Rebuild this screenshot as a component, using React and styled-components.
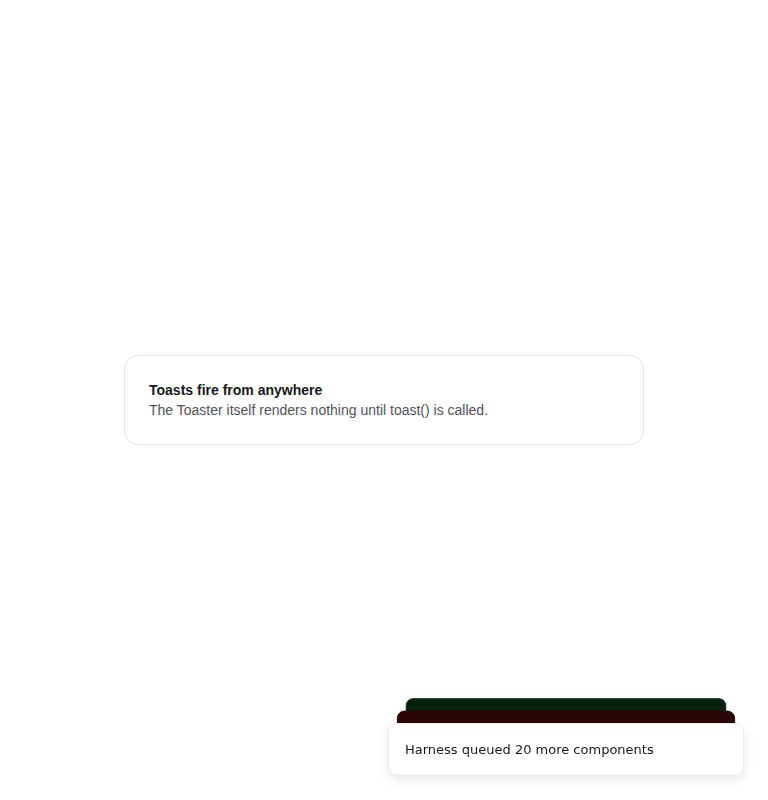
import React from "react";
import styled, { createGlobalStyle } from "styled-components";

const GlobalStyle = createGlobalStyle`
  html, body {
    margin: 0;
    padding: 0;
    background: #ffffff;
  }
  #root {
    min-height: 100vh;
  }
`;

const Page = styled.main`
  min-height: 100vh;
  display: flex;
  align-items: center;
  justify-content: center;
  font-family: "Liberation Sans", Arial, sans-serif;
`;

const Card = styled.section`
  width: 520px;
  box-sizing: border-box;
  padding: 24px;
  border: 1px solid #e5e5e5;
  border-radius: 14px;
  background: #fff;
`;

const Title = styled.h2`
  margin: 0;
  font-size: 14px;
  line-height: 20px;
  font-weight: 700;
  color: #18181b;
`;

const Description = styled.p`
  margin: 0;
  font-size: 14px;
  line-height: 20px;
  color: #52525b;
`;

const Toaster = styled.ol`
  position: fixed;
  right: 24px;
  bottom: 25px;
  width: 356px;
  height: 52px;
  margin: 0;
  padding: 0;
  list-style: none;
  font-family: "DejaVu Sans", sans-serif;
`;

const Toast = styled.li`
  position: absolute;
  left: 0;
  right: 0;
  bottom: 0;
  height: 52px;
  box-sizing: border-box;
  display: flex;
  align-items: center;
  padding: 0 16px;
  border-radius: 8px;
  font-size: 13px;
  color: #171717;
  background: ${(p) => p.$bg};
  border: 1px solid ${(p) => (p.$front ? "#ededed" : p.$bg)};
  box-shadow: ${(p) => (p.$front ? "0 4px 12px rgba(0, 0, 0, 0.1)" : "none")};
  transform-origin: center bottom;
  transform: translateY(${(p) => -15 * p.$index}px)
    scale(${(p) => 1 - 0.05 * p.$index});
  z-index: ${(p) => 10 - p.$index};
`;

const ToastText = styled.span`
  opacity: ${(p) => (p.$front ? 1 : 0)};
`;

const toasts = [
  { id: 3, text: "Harness queued 20 more components", bg: "#ffffff" },
  { id: 2, text: "Build failed", bg: "#2b0606" },
  { id: 1, text: "Build succeeded", bg: "#05200f" },
];

export default function App() {
  return (
    <>
      <GlobalStyle />
      <Page>
        <Card>
          <Title>Toasts fire from anywhere</Title>
          <Description>
            The Toaster itself renders nothing until toast() is called.
          </Description>
        </Card>
      </Page>
      <Toaster>
        {toasts.map((t, i) => (
          <Toast key={t.id} $index={i} $bg={t.bg} $front={i === 0}>
            <ToastText $front={i === 0}>{t.text}</ToastText>
          </Toast>
        ))}
      </Toaster>
    </>
  );
}
